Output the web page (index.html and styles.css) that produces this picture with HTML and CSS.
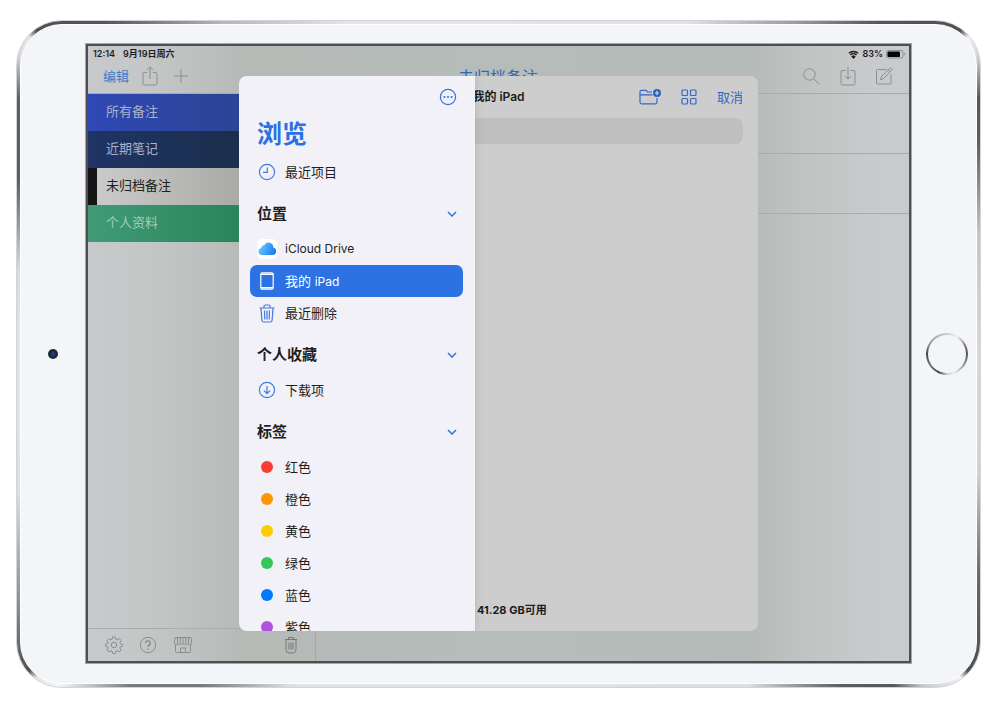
FILE: index.html
```html
<!DOCTYPE html>
<html lang="zh-CN">
<head>
<meta charset="utf-8">
<title>浏览</title>
<link rel="stylesheet" href="styles.css">
</head>
<body>
<div class="device">
 <div class="bezel">
  <div class="side"><span class="camera"></span></div>
  <main class="screen">
    <div class="status">
      <span class="time">12:14</span><span>9月19日周六</span>
      <span class="status-right">
        <svg width="11" height="9" viewBox="0 0 11 9"><path d="M.9 3.3a6.6 6.6 0 0 1 9.2 0M2.5 5a4.3 4.3 0 0 1 6 0" fill="none" stroke="#1c1d1e" stroke-width="1.5"/><path d="M5.5 8.4 3.8 6.6a2.5 2.5 0 0 1 3.4 0z" fill="#1c1d1e"/></svg>
        <span>83%</span>
        <svg width="20" height="9" viewBox="0 0 20 9"><rect x=".5" y=".5" width="16.5" height="7.5" rx="2" fill="none" stroke="#8d8f90"/><rect x="1.5" y="1.5" width="12.5" height="5.5" rx="1" fill="#050505" stroke="none"/><path d="M18.2 3v2.6q1.2-.4 1.2-1.3t-1.2-1.3z" fill="#8d8f90" stroke="none"/></svg>
      </span>
    </div>
    <header class="toolbar">
      <div class="tools tools-left">
        <button class="text-btn edit">编辑</button>
        <button class="icon-btn" aria-label="共享"><svg width="16" height="20" viewBox="0 0 16 20"><path d="M5 6.5H2.5A1.5 1.5 0 0 0 1 8v9.5A1.5 1.5 0 0 0 2.5 19h11a1.5 1.5 0 0 0 1.5-1.5V8a1.5 1.5 0 0 0-1.5-1.5H11M8 13V1M5 3.8l3-3 3 3"/></svg></button>
        <button class="icon-btn" aria-label="新建"><svg width="14" height="14" viewBox="0 0 14 14"><path d="M7 0v14M0 7h14"/></svg></button>
      </div>
      <h1 class="page-title">未归档备注</h1>
      <div class="tools tools-right">
        <button class="icon-btn" aria-label="搜索"><svg width="17" height="17" viewBox="0 0 17 17"><circle cx="6.5" cy="6.5" r="5.7"/><path d="m10.7 10.7 5.5 5.5"/></svg></button>
        <button class="icon-btn" aria-label="导入"><svg width="16" height="20" viewBox="0 0 16 20"><path d="M5.5 4.5H2A1 1 0 0 0 1 5.5v12a1.5 1.5 0 0 0 1.5 1.5h11a1.5 1.5 0 0 0 1.5-1.5v-12a1 1 0 0 0-1-1h-3.5M8 1v12M5 10l3 3 3-3"/></svg></button>
        <button class="icon-btn" aria-label="撰写"><svg width="17" height="18" viewBox="0 0 17 18"><path d="M10.5 2.5h-9a1 1 0 0 0-1 1v12.5a1 1 0 0 0 1 1h12.5a1 1 0 0 0 1-1V7.5M4.500 13l1-3.5 8.2-8.2q1-.8 1.9.1t.1 1.9L7.5 11.5zM12.2 2.8l2.2 2.2"/></svg></button>
      </div>
    </header>
    <div class="workspace">
      <aside class="folders">
        <nav class="folder-list">
          <a href="#" class="folder all">所有备注</a>
          <a href="#" class="folder recent">近期笔记</a>
          <a href="#" class="folder unfiled">未归档备注</a>
          <a href="#" class="folder personal">个人资料</a>
        </nav>
        <footer class="folder-tools">
          <button class="icon-btn" aria-label="设置"><svg width="18" height="18" viewBox="0 0 18 18"><path d="M7.6 1h2.8l.5 2.3 1.3.5 2-1.2 2 2-1.3 2 .5 1.2 2.1.5v1.9l-2.2.6-.5 1.2 1.3 2-2 2-2-1.3-1.2.5-.5 2.2H7.6l-.5-2.2-1.2-.5-2 1.3-2-2 1.3-2-.5-1.2-2.2-.6V8.3l2.2-.5.5-1.2-1.3-2 2-2 2 1.2 1.2-.5z"/><circle cx="9" cy="9" r="2.7"/></svg></button>
          <button class="icon-btn" aria-label="帮助"><svg width="18" height="18" viewBox="0 0 18 18"><circle cx="9" cy="9" r="7.7"/><path d="M6.7 7a2.3 2.3 0 1 1 3.5 2Q9 9.7 9 11M9 12.4v1.3" stroke-width="1.5"/></svg></button>
          <button class="icon-btn" aria-label="商店"><svg width="20" height="18" viewBox="0 0 20 18"><path d="M2 1.5h16l.7 5.5a1.5 1.5 0 0 1-3 .5 1.5 1.5 0 0 1-2.9 0 1.5 1.5 0 0 1-2.8 0 1.5 1.5 0 0 1-2.8 0 1.5 1.5 0 0 1-2.9 0 1.5 1.5 0 0 1-3-.5zM4.500 1.5v6M7.200 1.5v6M10 1.5v6M12.8 1.5v6M15.5 1.5v6M2.500 9v6.5a1 1 0 0 0 1 1h13a1 1 0 0 0 1-1V9M7.500 16.5V12h5v4.5"/></svg></button>
          <button class="icon-btn trash" aria-label="废纸篓"><svg width="14" height="18" viewBox="0 0 14 18"><path d="M1 3.5h12M4.500 3V1.500h5V3M2 4v8.500q0 4.500 3.500 4.500h3Q12 17 12 12.500V4M5 6.500v7M7 6.500v7M9 6.500v7"/></svg></button>
        </footer>
      </aside>
      <section class="notes"><div class="note"></div><div class="note"></div></section>
    </div>

    <div class="picker" role="dialog" aria-label="我的 iPad">
      <section class="files">
        <header class="files-head">
          <h2 class="files-title">我的 iPad</h2>
          <div class="files-tools">
            <button class="blue-btn" aria-label="新建文件夹"><svg width="22" height="16" viewBox="0 0 22 16"><path d="M13 3H8.5L7 1.300H2.500Q1 1.300 1 2.800V13q0 1.800 1.800 1.800h13.400Q18 14.800 18 13V9M1 5.800h12.500"/><circle cx="18" cy="4" r="4" fill="#2960c4" stroke="none"/><path d="M18 1.800v4.400M15.800 4h4.400" stroke="#d2d5da"/></svg></button>
            <button class="blue-btn" aria-label="网格"><svg width="16" height="16" viewBox="0 0 16 16"><rect x="1" y="1" width="5.5" height="5.5" rx="1"/><rect x="9.5" y="1" width="5.5" height="5.5" rx="1"/><rect x="1" y="9.5" width="5.5" height="5.5" rx="1"/><rect x="9.5" y="9.5" width="5.5" height="5.5" rx="1"/></svg></button>
            <button class="text-btn">取消</button>
          </div>
        </header>
        <input class="search" type="search" aria-label="搜索">
        <p class="storage">41.28 GB可用</p>
      </section>
      <aside class="browse">
        <div class="browse-head"><button class="blue-btn" aria-label="更多"><svg width="18" height="18" viewBox="0 0 18 18"><circle cx="9" cy="9" r="7.6"/><g fill="#2f72e4" stroke="none"><circle cx="5.4" cy="9" r="1.1"/><circle cx="9" cy="9" r="1.1"/><circle cx="12.6" cy="9" r="1.1"/></g></svg></button></div>
        <h2 class="browse-title">浏览</h2>
        <a href="#" class="row"><span class="ico"><svg width="18" height="18" viewBox="0 0 18 18"><circle cx="9" cy="9" r="7.6"/><path d="M9.300 4.500V9.300H5"/></svg></span>最近项目</a>
        <h3 class="group">位置<svg width="10" height="6" viewBox="0 0 10 6"><path d="m1 1 4 4 4-4"/></svg></h3>
        <a href="#" class="row"><span class="ico tile"><svg width="18" height="14" viewBox="0 0 18 14"><defs><linearGradient id="sky" x1="0" x2="1" y1=".4" y2=".7"><stop offset="0" stop-color="#6cc9fa"/><stop offset="1" stop-color="#1a78f0"/></linearGradient></defs><path d="M4 13a3.600 3.600 0 0 1-.8-7.100 3 3 0 0 1 3-2.700A4.800 4.800 0 0 1 15.300 5.500 3.800 3.800 0 0 1 14.300 13z" fill="url(#sky)" stroke="none"/></svg></span><span class="latin">iCloud Drive</span></a>
        <a href="#" class="row selected"><span class="ico"><svg width="14" height="18" viewBox="0 0 14 18"><rect x=".8" y=".8" width="12.4" height="16.4" rx="1.5"/><path d="M1 2.300h12M1 15.700h12" stroke-width="1.4"/></svg></span><span>我的 <span class="latin">iPad</span></span></a>
        <a href="#" class="row"><span class="ico"><svg width="16" height="19" viewBox="0 0 16 19"><path d="M.5 4h15M5 3.800V2.300Q5 1 6.300 1h3.400Q11 1 11 2.300v1.500M2 4.200l.9 12q.1 1.800 1.900 1.800h6.400q1.800 0 1.900-1.800l.9-12M5.500 6.500l.3 9M8 6.500v9M10.500 6.500l-.3 9"/></svg></span>最近删除</a>
        <h3 class="group">个人收藏<svg width="10" height="6" viewBox="0 0 10 6"><path d="m1 1 4 4 4-4"/></svg></h3>
        <a href="#" class="row"><span class="ico"><svg width="18" height="18" viewBox="0 0 18 18"><circle cx="9" cy="9" r="7.6"/><path d="M9 5v7.500M6 9.700l3 3 3-3"/></svg></span>下载项</a>
        <h3 class="group">标签<svg width="10" height="6" viewBox="0 0 10 6"><path d="m1 1 4 4 4-4"/></svg></h3>
        <a href="#" class="row"><span class="ico"><i class="dot red"></i></span>红色</a>
        <a href="#" class="row"><span class="ico"><i class="dot orange"></i></span>橙色</a>
        <a href="#" class="row"><span class="ico"><i class="dot yellow"></i></span>黄色</a>
        <a href="#" class="row"><span class="ico"><i class="dot green"></i></span>绿色</a>
        <a href="#" class="row"><span class="ico"><i class="dot blue"></i></span>蓝色</a>
        <a href="#" class="row"><span class="ico"><i class="dot purple"></i></span>紫色</a>
      </aside>
    </div>
  </main>
  <div class="side side-right"><button class="home" aria-label="主屏幕"></button></div>
 </div>
</div>
</body>
</html>
```
FILE: styles.css
```css
* { box-sizing: border-box; }
body {
  margin: 0;
  min-height: 100vh;
  padding: 20px 19px 23px 16px;
  display: flex;
  background: #fff;
  font-family: Inter, "Noto Sans CJK SC", sans-serif;
  font-size: 13px;
  line-height: 20px;
}
h1, h2, h3, p { margin: 0; }
a { color: inherit; text-decoration: none; }
button { border: 0; padding: 0; background: none; font: inherit; color: inherit; display: flex; align-items: center; }
svg { display: block; fill: none; stroke: currentColor; flex: none; }

/* Device body */
.device {
  flex: 1;
  display: flex;
  padding: 3px;
  border: 1px solid #d2d3d4;
  border-radius: 46px;
  background: conic-gradient(#e2e4e5 0deg, #dfe1e2 30deg, #9a9c9d 42deg, #555859 49deg, #4d5051 55deg, #f4f5f6 56deg, #d5d7d8 58deg, #55585a 62deg, #5c5f60 66deg, #c4c6c7 76deg, #d6d8d9 90deg, #d0d2d3 104deg, #66696a 115deg, #4c4f50 124deg, #f4f5f6 125deg, #c9cbcc 128deg, #55585a 130deg, #5c5f60 134deg, #dcdedf 143deg, #e2e4e5 180deg, #dfe1e2 212deg, #77797a 222deg, #77797a 228deg, #f4f5f6 233deg, #e5e6e7 235deg, #4c4f50 236deg, #909293 243deg, #dcdedf 254deg, #e4e5e6 270deg, #d8dadb 280deg, #5c5f60 290deg, #5c5f60 298deg, #d8dadb 302deg, #e5e6e7 304deg, #4d5051 305deg, #55585a 310deg, #b5b7b8 320deg, #e2e4e5 335deg, #e2e4e5 360deg);
}
.bezel {
  flex: 1;
  display: grid;
  grid-template-columns: 64px 1fr 64px;
  padding: 18px 0 19px;
  border: 1px solid #fff;
  border-radius: 42px;
  background: #f4f5f8;
}
.side { display: flex; align-items: center; justify-content: center; }
.side-right { padding-left: 6px; }
.camera { width: 10px; height: 10px; border-radius: 50%; background: radial-gradient(#24469c, #1b2232 50%, #3a3d44); }
.home {
  width: 42px;
  height: 42px;
  border: 2px solid transparent;
  border-radius: 50%;
  background: linear-gradient(#f4f5f8, #f4f5f8) padding-box, conic-gradient(#ccc 0deg, #eee 30deg, #777 65deg, #555 90deg, #999 125deg, #eee 160deg, #ccc 180deg, #444 205deg, #777 235deg, #444 270deg, #999 300deg, #ccc 360deg) border-box;
}

/* Notes app */
.screen {
  position: relative;
  min-width: 0;
  margin: 1px;
  display: flex;
  flex-direction: column;
  border: 2px solid #4d4f50;
  box-shadow: 0 0 0 1px #a4a6a8;
  background: linear-gradient(90deg, #c8c9cb 0%, #c4c6c6 8%, #b5bab7 19%, #b6bcba 50%, #b5bbb8 81%, #c2c4c3 88%, #c9cacc 96%);
}
.status {
  height: 16px;
  padding: 0 3px 0 5px;
  display: flex;
  align-items: center;
  gap: 8px;
  font-size: 9px;
  font-weight: 600;
  line-height: 12px;
  color: #1c1d1e;
}
.status-right { margin-left: auto; display: flex; align-items: center; gap: 3px; }
.toolbar {
  height: 32px;
  padding: 0 16px 3px 15px;
  display: grid;
  grid-template-columns: 1fr auto 1fr;
  align-items: center;
  border-bottom: 1px solid #a6abad;
}
.tools { display: flex; align-items: center; }
.tools-left { gap: 16px; }
.edit { margin-right: -3px; color: #3e79ca; }
.tools-right { justify-content: flex-end; gap: 20px; }
.icon-btn { color: #8b8e90; }
.page-title { padding-top: 2px; font-size: 16px; font-weight: 400; color: #2f68ba; }
.workspace { flex: 1; display: flex; }
.folders { width: 228px; display: flex; flex-direction: column; border-right: 1px solid #a3a8a7; }
.folder-list { flex: 1; }
.folder { display: flex; align-items: center; height: 37px; padding: 0 0 3px 18px; color: #a9b2cc; }
.all { background: linear-gradient(90deg, #2f48b4, #2c4494 66%); }
.recent { background: linear-gradient(90deg, #1f3465, #1a2f4c 66%); }
.unfiled { padding-left: 9px; border-left: 9px solid #151515; color: #202121; background: linear-gradient(90deg, #cacacb, #a9aaa6 66%); }
.personal { color: #a3cdbb; background: linear-gradient(90deg, #409a74, #2b855a 66%); }
.folder-tools {
  height: 33px;
  padding: 0 17px;
  display: flex;
  align-items: center;
  gap: 16px;
  border-top: 1px solid #a9adae;
}
.trash { margin-left: auto; color: #747978; }
.notes { flex: 1; }
.note { height: 60px; border-bottom: 1px solid #a6abad; }

/* File picker */
.picker { position: absolute; inset: 30px 151px; border-radius: 8px; overflow: hidden; background: #cdcdcd; }
.files { height: 100%; display: flex; flex-direction: column; }
.files-head {
  height: 42px;
  padding: 0 15px;
  display: grid;
  grid-template-columns: 1fr auto 1fr;
  align-items: center;
}
.files-title { grid-column: 2; font-size: 12px; font-weight: 600; color: #1b1b1b; }
.files-tools { display: flex; align-items: center; justify-content: flex-end; gap: 20px; color: #3369bf; }
.blue-btn { color: #3369c4; }
.blue-btn svg, .ico svg { stroke-width: 1.2; }
.search { height: 26px; margin: 0 15px; padding: 0 12px; border: 0; border-radius: 8px; background: #bfbfbf; font: inherit; }
.storage { margin-top: auto; padding: 0 0 11px 238px; font-size: 11px; font-weight: 700; color: #1b1b1b; }
.browse {
  position: absolute;
  inset: 0 auto 0 0;
  width: 236px;
  overflow: hidden;
  background: #f2f1f7;
  box-shadow: 0 0 8px rgba(0, 0, 0, .12);
  color: #1e1e20;
}
.browse-head { height: 42px; padding: 0 18px; display: flex; align-items: center; justify-content: flex-end; }
.browse .blue-btn { color: #2f72e4; }
.browse-title { padding: 0 18px; margin-bottom: 6px; font-size: 25px; line-height: 32px; font-weight: 600; color: #2c70e3; }
.row {
  display: flex;
  align-items: center;
  gap: 8px;
  height: 32px;
  margin: 0 12px 0 11px;
  padding-left: 7px;
  border-radius: 7px;
}
.selected { background: #2d72e2; color: #fff; }
.latin { font-size: 12px; }
.ico { width: 20px; height: 20px; display: flex; align-items: center; justify-content: center; color: #3d7be6; }
.selected .ico { color: #fff; }
.tile { background: #fff; border-radius: 5px; }
.group {
  display: flex;
  align-items: center;
  justify-content: space-between;
  height: 45px;
  padding: 6px 18px 0;
  font-size: 15px;
  font-weight: 700;
}
.group svg { color: #2f72e4; stroke-width: 1.5; }
.dot { width: 12px; height: 12px; border-radius: 50%; }
.red { background: #ff3a30; }
.orange { background: #ff9500; }
.yellow { background: #fc0; }
.green { background: #34c759; }
.blue { background: #007aff; }
.purple { background: #af52de; }
```
